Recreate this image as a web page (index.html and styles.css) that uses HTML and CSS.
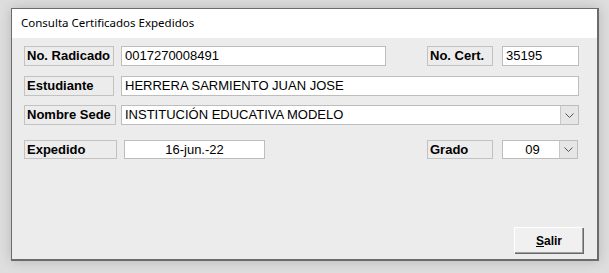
FILE: index.html
```html
<!DOCTYPE html>
<html>
<head>
<meta charset="utf-8">
<link rel="stylesheet" href="styles.css">
</head>
<body>
<div class="window">
  <div class="titlebar">Consulta Certificados Expedidos</div>
  <div class="content">
    <div class="row r1">
      <div class="label w90">No. Radicado</div>
      <div class="field w265">0017270008491</div>
      <div class="label cert">No. Cert.</div>
      <div class="field w77">35195</div>
    </div>
    <div class="row r2">
      <div class="label w90">Estudiante</div>
      <div class="field w458">HERRERA SARMIENTO JUAN JOSE</div>
    </div>
    <div class="row r3">
      <div class="label w92">Nombre Sede</div>
      <div class="field select w458 sede"><span class="val">INSTITUCIÓN EDUCATIVA MODELO</span><span class="drop"><svg width="9" height="5" viewBox="0 0 9 5"><path d="M0.5 0.5 L4.5 4.5 L8.5 0.5" fill="none" stroke="#555" stroke-width="1"/></svg></span></div>
    </div>
    <div class="row r4">
      <div class="label w93">Expedido</div>
      <div class="field center w141">16-jun.-22</div>
      <div class="label grado">Grado</div>
      <div class="field select w76"><span class="val center">09</span><span class="drop"><svg width="9" height="5" viewBox="0 0 9 5"><path d="M0.5 0.5 L4.5 4.5 L8.5 0.5" fill="none" stroke="#555" stroke-width="1"/></svg></span></div>
    </div>
    <div class="footer">
      <button class="btn"><u>S</u>alir</button>
    </div>
  </div>
</div>
</body>
</html>
```
FILE: styles.css
```css
* { box-sizing: border-box; }
html, body { margin: 0; padding: 0; }
body {
  width: 609px;
  height: 273px;
  background: #dedede;
  padding: 8px 0 0 11px;
  font-family: "Liberation Sans", Arial, sans-serif;
  overflow: hidden;
}
.window {
  width: 588px;
  height: 253px;
  border: 1px solid #6b6b6b;
  border-right-width: 2px;
  border-bottom-width: 2px;
  background: #ececec;
  box-shadow: 0 0 12px rgba(0,0,0,0.18);
  display: flex;
  flex-direction: column;
}
.titlebar {
  height: 29px;
  background: #fff;
  font-family: "Noto Sans", "Open Sans", sans-serif;
  font-size: 11.5px;
  color: #000;
  padding: 6px 0 0 9px;
  line-height: 16px;
}
.content {
  flex: 1;
  padding: 8px 0 0 12px;
  display: flex;
  flex-direction: column;
}
.row {
  display: flex;
  align-items: stretch;
  height: 20px;
}
.r2 { margin-top: 10px; }
.r3 { margin-top: 9px; }
.r4 { margin-top: 15px; height: 19px; }
.label {
  background: #ececec;
  border: 1px solid #c2c2c2;
  font-weight: bold;
  font-size: 13px;
  line-height: 18px;
  padding-left: 2px;
  color: #000;
  white-space: nowrap;
}
.r4 .label, .r4 .field { line-height: 17px; }
.field {
  background: #fff;
  border: 1px solid #bdbdbd;
  font-size: 13px;
  line-height: 18px;
  padding-left: 3px;
  color: #000;
  white-space: nowrap;
  margin-left: 7px;
}
.w90 { width: 90px; }
.w92 { width: 92px; }
.w93 { width: 93px; }
.w265 { width: 265px; }
.w458 { width: 458px; }
.w77 { width: 77px; margin-left: 9px; }
.w141 { width: 141px; }
.w76 { width: 76px; margin-left: 9px; }
.sede { margin-left: 5px; }
.cert { width: 66px; margin-left: 41px; }
.grado { width: 66px; margin-left: 162px; }
.center { text-align: center; padding-left: 0; }
.select {
  display: flex;
  padding-right: 0;
}
.select .val { flex: 1; }
.drop {
  width: 18px;
  background: #e6e6e6;
  border-left: 1px solid #c8c8c8;
  display: flex;
  align-items: center;
  justify-content: center;
}
.footer {
  flex: 1;
  display: flex;
  justify-content: flex-end;
  align-items: flex-end;
  padding: 0 14px 6px 0;
}
.btn {
  width: 69px;
  height: 26px;
  background: #f0f0f0;
  border: none;
  border-top: 1px solid #fff;
  border-left: 1px solid #fff;
  box-shadow: inset -1px -1px 0 #a0a0a0, 1px 1px 0 #696969;
  font-family: "Liberation Sans", Arial, sans-serif;
  font-weight: bold;
  font-size: 12px;
  color: #000;
  padding: 0;
}
.btn u { text-decoration: underline; }
```
